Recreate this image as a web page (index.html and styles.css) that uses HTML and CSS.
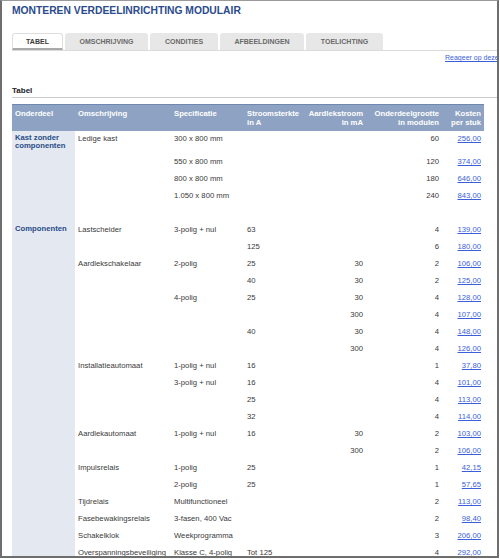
FILE: index.html
```html
<!DOCTYPE html>
<html lang="nl">
<head>
<meta charset="utf-8">
<title>Monteren verdeelinrichting modulair</title>
<link rel="stylesheet" href="styles.css">
</head>
<body>
<div class="frame">
  <h1 class="title">MONTEREN VERDEELINRICHTING MODULAIR</h1>
  <div class="tabs">
    <div class="tab active">TABEL</div>
    <div class="tab">OMSCHRIJVING</div>
    <div class="tab">CONDITIES</div>
    <div class="tab">AFBEELDINGEN</div>
    <div class="tab">TOELICHTING</div>
  </div>
  <div class="feedback"><a href="#">Reageer op deze pagina</a></div>
  <h2 class="section">Tabel</h2>
  <table class="price">
    <colgroup>
      <col class="c1"><col class="c2"><col class="c3"><col class="c4"><col class="c5"><col class="c6"><col class="c7">
    </colgroup>
    <thead>
      <tr>
        <th>Onderdeel</th>
        <th>Omschrijving</th>
        <th>Specificatie</th>
        <th>Stroomsterkte<br>in A</th>
        <th class="r">Aardlekstroom<br>in mA</th>
        <th class="r">Onderdeelgrootte<br>in modulen</th>
        <th class="r">Kosten<br>per stuk</th>
      </tr>
    </thead>
    <tbody>
      <tr><td class="grp">Kast zonder<br>componenten</td><td>Ledige kast</td><td>300 x 800 mm</td><td></td><td class="r"></td><td class="r">60</td><td class="r"><a href="#">256,00</a></td></tr>
      <tr><td class="grp"></td><td></td><td>550 x 800 mm</td><td></td><td class="r"></td><td class="r">120</td><td class="r"><a href="#">374,00</a></td></tr>
      <tr><td class="grp"></td><td></td><td>800 x 800 mm</td><td></td><td class="r"></td><td class="r">180</td><td class="r"><a href="#">646,00</a></td></tr>
      <tr><td class="grp"></td><td></td><td>1.050 x 800 mm</td><td></td><td class="r"></td><td class="r">240</td><td class="r"><a href="#">843,00</a></td></tr>
      <tr class="spacer"><td class="grp"></td><td colspan="6"></td></tr>
      <tr><td class="grp">Componenten</td><td>Lastscheider</td><td>3-polig + nul</td><td>63</td><td class="r"></td><td class="r">4</td><td class="r"><a href="#">139,00</a></td></tr>
      <tr><td class="grp"></td><td></td><td></td><td>125</td><td class="r"></td><td class="r">6</td><td class="r"><a href="#">180,00</a></td></tr>
      <tr><td class="grp"></td><td>Aardlekschakelaar</td><td>2-polig</td><td>25</td><td class="r">30</td><td class="r">2</td><td class="r"><a href="#">106,00</a></td></tr>
      <tr><td class="grp"></td><td></td><td></td><td>40</td><td class="r">30</td><td class="r">2</td><td class="r"><a href="#">125,00</a></td></tr>
      <tr><td class="grp"></td><td></td><td>4-polig</td><td>25</td><td class="r">30</td><td class="r">4</td><td class="r"><a href="#">128,00</a></td></tr>
      <tr><td class="grp"></td><td></td><td></td><td></td><td class="r">300</td><td class="r">4</td><td class="r"><a href="#">107,00</a></td></tr>
      <tr><td class="grp"></td><td></td><td></td><td>40</td><td class="r">30</td><td class="r">4</td><td class="r"><a href="#">148,00</a></td></tr>
      <tr><td class="grp"></td><td></td><td></td><td></td><td class="r">300</td><td class="r">4</td><td class="r"><a href="#">126,00</a></td></tr>
      <tr><td class="grp"></td><td>Installatieautomaat</td><td>1-polig + nul</td><td>16</td><td class="r"></td><td class="r">1</td><td class="r"><a href="#">37,80</a></td></tr>
      <tr><td class="grp"></td><td></td><td>3-polig + nul</td><td>16</td><td class="r"></td><td class="r">4</td><td class="r"><a href="#">101,00</a></td></tr>
      <tr><td class="grp"></td><td></td><td></td><td>25</td><td class="r"></td><td class="r">4</td><td class="r"><a href="#">113,00</a></td></tr>
      <tr><td class="grp"></td><td></td><td></td><td>32</td><td class="r"></td><td class="r">4</td><td class="r"><a href="#">114,00</a></td></tr>
      <tr><td class="grp"></td><td>Aardlekautomaat</td><td>1-polig + nul</td><td>16</td><td class="r">30</td><td class="r">2</td><td class="r"><a href="#">103,00</a></td></tr>
      <tr><td class="grp"></td><td></td><td></td><td></td><td class="r">300</td><td class="r">2</td><td class="r"><a href="#">106,00</a></td></tr>
      <tr><td class="grp"></td><td>Impulsrelais</td><td>1-polig</td><td>25</td><td class="r"></td><td class="r">1</td><td class="r"><a href="#">42,15</a></td></tr>
      <tr><td class="grp"></td><td></td><td>2-polig</td><td>25</td><td class="r"></td><td class="r">1</td><td class="r"><a href="#">57,65</a></td></tr>
      <tr><td class="grp"></td><td>Tijdrelais</td><td>Multifunctioneel</td><td></td><td class="r"></td><td class="r">2</td><td class="r"><a href="#">113,00</a></td></tr>
      <tr><td class="grp"></td><td>Fasebewakingsrelais</td><td>3-fasen, 400 Vac</td><td></td><td class="r"></td><td class="r">2</td><td class="r"><a href="#">98,40</a></td></tr>
      <tr><td class="grp"></td><td>Schakelklok</td><td>Weekprogramma</td><td></td><td class="r"></td><td class="r">3</td><td class="r"><a href="#">206,00</a></td></tr>
      <tr><td class="grp"></td><td>Overspanningsbeveiliging</td><td>Klasse C, 4-polig</td><td>Tot 125</td><td class="r"></td><td class="r">4</td><td class="r"><a href="#">292,00</a></td></tr>
      <tr><td class="grp"></td><td></td><td></td><td></td><td class="r"></td><td class="r"></td><td class="r"></td></tr>
      <tr><td class="grp"></td><td></td><td></td><td></td><td class="r"></td><td class="r"></td><td class="r"></td></tr>
    </tbody>
  </table>
</div>
</body>
</html>
```

FILE: styles.css
```css
html, body {
  margin: 0;
  padding: 0;
  background: #ffffff;
}

body {
  font-family: "Liberation Sans", Arial, sans-serif;
  color: #333333;
}

.frame {
  box-sizing: border-box;
  width: 499px;
  height: 558px;
  overflow: hidden;
  border-top: 1px solid #9a9a9a;
  border-left: 2px solid #6e6e6e;
  border-right: 2px solid #6e6e6e;
  border-bottom: 2px solid #6e6e6e;
  padding: 3px 0 0 10px;
}

.title {
  margin: 0;
  font-size: 10.3px;
  line-height: 13px;
  font-weight: bold;
  color: #2b4b8c;
  white-space: nowrap;
}

.tabs {
  margin-top: 16px;
  display: grid;
  grid-template-columns: 51px 83px 68px 84px 77px;
  column-gap: 2px;
  border-bottom: 1px solid #dadada;
}

.tab {
  height: 17px;
  line-height: 17px;
  text-align: center;
  font-size: 7px;
  font-weight: bold;
  color: #6a6a6a;
  background: #e7e7e7;
  border-radius: 3px 3px 0 0;
  white-space: nowrap;
}

.tab.active {
  box-sizing: border-box;
  background: #ffffff;
  color: #3a3a3a;
  border: 1px solid #dedede;
  border-bottom: 2px solid #a9a9a9;
  line-height: 15px;
}

.feedback {
  margin-top: 2px;
  margin-left: 433px;
  font-size: 7px;
  line-height: 9px;
  white-space: nowrap;
}

.feedback a {
  color: #3b5fd9;
}

.section {
  margin: 24px 0 0 0;
  padding-bottom: 1px;
  font-size: 8px;
  line-height: 10px;
  font-weight: bold;
  color: #222222;
  border-bottom: 1px solid #cccccc;
}

.price {
  margin-top: 6px;
  width: 472px;
  table-layout: fixed;
  border-collapse: collapse;
  font-size: 7.7px;
}

.c1 { width: 63px; }
.c2 { width: 96px; }
.c3 { width: 73px; }
.c4 { width: 61px; }
.c5 { width: 61px; }
.c6 { width: 76px; }
.c7 { width: 42px; }

.price th {
  background: #8ea3c3;
  border-top: 1px solid #7088ad;
  color: #ffffff;
  font-weight: bold;
  text-align: left;
  vertical-align: top;
  line-height: 9px;
  padding: 4px 3px 4px 3px;
  white-space: nowrap;
}

.price td {
  padding: 3px 3px 4px 3px;
  line-height: 10px;
  vertical-align: top;
  white-space: nowrap;
  color: #3a3a3a;
}

.price .r {
  text-align: right;
}

.price td.grp {
  background: #e4e9f1;
  color: #284c86;
  font-weight: bold;
  line-height: 8px;
}

.spacer td {
  height: 10px;
}

.price a {
  color: #3b5fd9;
}
```
